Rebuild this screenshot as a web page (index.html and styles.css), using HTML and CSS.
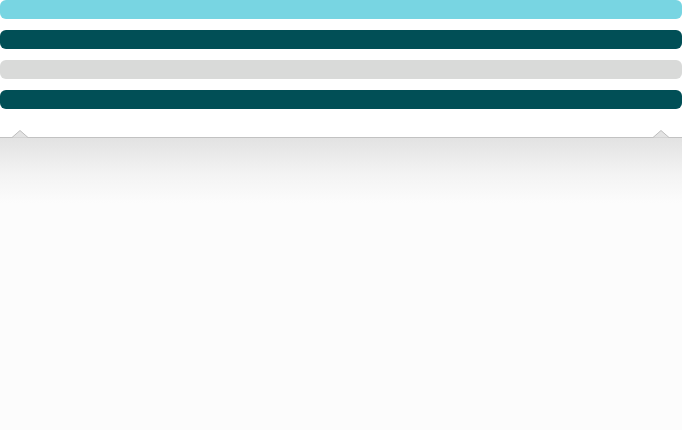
FILE: index.html
```html
<!DOCTYPE html>
<html>
<head>
<meta charset="utf-8">
<link rel="stylesheet" href="styles.css">
</head>
<body>
<div class="bars">
  <div class="bar bar-light"></div>
  <div class="bar bar-dark"></div>
  <div class="bar bar-grey"></div>
  <div class="bar bar-dark"></div>
</div>
<div class="panel">
  <svg class="notch notch-left" width="16" height="8" viewBox="0 0 16 8"><path d="M0 7.5 L8 0.5 L16 7.5" fill="#e3e3e3" stroke="#bdbdbd" stroke-width="1"/></svg>
  <svg class="notch notch-right" width="16" height="8" viewBox="0 0 16 8"><path d="M0 7.5 L8 0.5 L16 7.5" fill="#e3e3e3" stroke="#bdbdbd" stroke-width="1"/></svg>
</div>
</body>
</html>
```
FILE: styles.css
```css
html, body {
  margin: 0;
  padding: 0;
}
body {
  width: 682px;
  height: 430px;
  background: #fcfcfc;
  overflow: hidden;
}
.bars {
  display: flex;
  flex-direction: column;
  gap: 11px;
  background: #ffffff;
  padding-bottom: 28px;
}
.bar {
  height: 19px;
  border-radius: 6px;
}
.bar-light { background: #78d5e2; }
.bar-dark { background: #014f56; }
.bar-grey { background: #d9dad9; }
.panel {
  position: relative;
  height: 293px;
  border-top: 1px solid #c2c2c2;
  background: linear-gradient(to bottom, #e2e2e2 0px, #f3f3f3 35px, #fcfcfc 65px, #fcfcfc 100%);
}
.notch {
  position: absolute;
  top: -8px;
  display: block;
}
.notch-left { left: 12px; }
.notch-right { left: 653px; }
```
